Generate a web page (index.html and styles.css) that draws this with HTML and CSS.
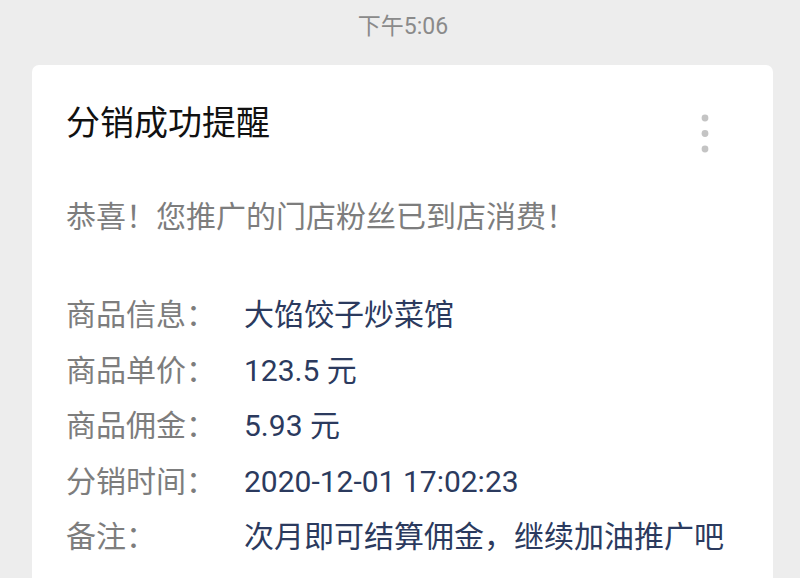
FILE: index.html
```html
<!DOCTYPE html>
<html lang="zh-CN">
<head>
<meta charset="utf-8">
<title>分销成功提醒</title>
<link rel="stylesheet" href="styles.css">
</head>
<body>
<div class="time">下午5:06</div>
<div class="card">
  <div class="head">
    <div class="title">分销成功提醒</div>
    <svg class="more" width="10" height="48" viewBox="0 0 10 48">
      <circle cx="5" cy="5" r="3.4" fill="#c4c4c4"/>
      <circle cx="5" cy="20.5" r="3.4" fill="#c4c4c4"/>
      <circle cx="5" cy="36" r="3.4" fill="#c4c4c4"/>
    </svg>
  </div>
  <div class="greet">恭喜！您推广的门店粉丝已到店消费！</div>
  <div class="info">
    <div class="label">商品信息：</div><div class="value">大馅饺子炒菜馆</div>
    <div class="label">商品单价：</div><div class="value">123.5 元</div>
    <div class="label">商品佣金：</div><div class="value">5.93 元</div>
    <div class="label">分销时间：</div><div class="value">2020-12-01 17:02:23</div>
    <div class="label">备注：</div><div class="value">次月即可结算佣金，继续加油推广吧</div>
  </div>
</div>
</body>
</html>
```
FILE: styles.css
```css
html, body {
  margin: 0;
  padding: 0;
  background: #ededed;
  height: 100%;
  overflow: hidden;
}
body {
  font-family: Roboto, "Noto Sans CJK SC", sans-serif;
}
.time {
  text-align: center;
  font-size: 23px;
  line-height: 30px;
  padding-top: 12px;
  color: #8a8a8a;
  padding-left: 6px;
}
.card {
  margin-top: 23px;
  margin-left: 32px;
  width: 741px;
  background: #ffffff;
  border-radius: 7px 7px 0 0;
  padding: 38px 0 0 34px;
  box-sizing: border-box;
  height: 513px;
}
.head {
  display: flex;
  justify-content: space-between;
  align-items: flex-start;
  height: 40px;
}
.title {
  font-size: 34px;
  line-height: 40px;
  color: #111111;
}
.more {
  margin-top: 10px;
  margin-right: 63px;
}
.greet {
  margin-top: 54px;
  font-size: 30px;
  line-height: 40px;
  color: #7d7d7d;
}
.info {
  margin-top: 50px;
  display: grid;
  grid-template-columns: 178px 1fr;
  font-size: 30px;
  line-height: 55.5px;
}
.label {
  color: #7d7d7d;
}
.value {
  color: #2b3a5e;
  white-space: nowrap;
}
```
